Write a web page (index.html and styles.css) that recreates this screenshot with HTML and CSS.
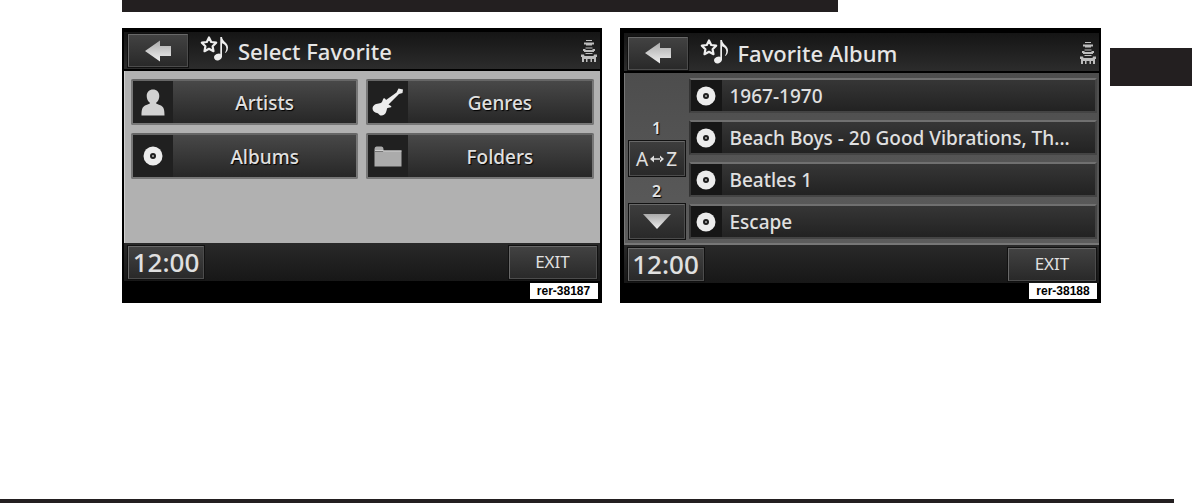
FILE: index.html
```
<!DOCTYPE html>
<html lang="en">
<head>
<meta charset="utf-8">
<title>Select Favorite</title>
<link rel="stylesheet" href="styles.css">
</head>
<body>
<svg class="defs" aria-hidden="true">
  <defs>
    <linearGradient id="metal" x1="0" y1="0" x2="0" y2="1">
      <stop offset="0" stop-color="#aaa"/><stop offset="1" stop-color="#efefef"/>
    </linearGradient>
    <symbol id="back" viewBox="0 0 28 22">
      <path d="M1 11 16 .500v5.500h11v10H16v5.500z" fill="url(#metal)"/>
    </symbol>
    <symbol id="starnote" viewBox="0 0 30 27">
      <path d="M9 2.500l2.200 4.500 5 .7-3.600 3.500.9 5L9 13.800l-4.500 2.400.9-5L1.800 7.700l5-.7z" fill="none" stroke="#eee" stroke-width="2.200" stroke-linejoin="round"/>
      <ellipse cx="18" cy="22" rx="4" ry="3.200" transform="rotate(-25 18 22)" fill="#eee"/>
      <path d="M20.300 2h1.700c.6 5 6 5.500 6 10.500 0 2.500-1 4-2.300 5.500l-.6-.5c.8-1.500 1.200-2.700 1.200-4.300 0-2.700-2-4.200-4.300-5V22h-1.700z" fill="#eee"/>
    </symbol>
    <symbol id="seats" viewBox="0 0 16 24">
      <path d="M5 1h6v1H5zM3 3.500h10v2H3zM5 5.500h6v1H5zM4.500 8.500h7v1h-7zM2 10h2l1 1h6l1-1h2v2h-1v1H3v-1H2zM4.500 14h7v1h-7zM0 15.500h3l.5 1.500h9l.5-1.500h3V18h-1v5h-2v-3h-2v3H9.500v-3h-3v3H5v-3H3v3H1v-5H0z" fill="#bdbdbd"/>
    </symbol>
    <symbol id="person" viewBox="0 0 24 27">
      <path d="M12 .500C8.300.500 5.700 3 5.700 7c0 3 1.300 5.300 3 6.500v1.200c-1 .5-3 .8-4.700 1.800C1.200 18 .500 21 .500 26.500h23c0-5.500-.7-8.500-3.500-10-1.700-1-3.700-1.300-4.700-1.800v-1.200c1.700-1.200 3-3.500 3-6.500 0-4-2.600-6.500-6.300-6.500z" fill="#d2d2d2"/>
    </symbol>
    <symbol id="disc" viewBox="0 0 20 20">
      <circle cx="10" cy="10" r="9.500" fill="#ececec"/>
      <circle cx="10" cy="10" r="3" fill="#1d1d1d"/>
      <circle cx="10" cy="10" r="1.100" fill="#aaa"/>
    </symbol>
    <symbol id="guitar" viewBox="0 0 32 28">
      <path d="M31 1.500 26.500.500 24.500 4.500 14 12c-.5-1-1-1.500-2-2-1.500 1-1 3-2.500 4.500C8 16 3 15 1 18.500c-1.500 3.500 1 6 4 6.500 2 .5 2 2.500 4.500 2.500 4 0 5-4 5.500-7 .5-1 2.500-.5 4.500-1.500-.5-1.500-2-2-3-2.500L27 6l3.500-1z" fill="#ececec"/>
    </symbol>
    <symbol id="folder" viewBox="0 0 28 21">
      <path d="M.500 20.500V3q0-2.500 2-2.500h5q2 0 2 2.500V4.500h18v16z" fill="#ababab"/>
      <path d="M1 4.500h8.500M9.500 5h18" stroke="#d0d0d0"/>
      <path d="M1 5.500h8" stroke="#777"/>
    </symbol>
    <symbol id="down" viewBox="0 0 28 15">
      <path d="M0 0h28L14 15z" fill="url(#metal)"/>
    </symbol>
    <symbol id="swap" viewBox="0 0 14 8">
      <path d="M0 4 4 .500v7zM14 4l-4-3.500v7zM3 3.300h8v1.400H3z" fill="#ddd"/>
    </symbol>
  </defs>
</svg>
<div class="page">
  <div class="top-rule"></div>
  <main class="spread">
    <section class="unit">
      <header class="bar">
        <button class="key back" aria-label="Back"><svg><use href="#back"/></svg></button>
        <svg class="starnote"><use href="#starnote"/></svg>
        <h1 class="title">Select Favorite</h1>
        <svg class="seats"><use href="#seats"/></svg>
      </header>
      <div class="tiles">
        <button class="tile"><span class="tile-icon"><svg class="person"><use href="#person"/></svg></span><span class="tile-label">Artists</span></button>
        <button class="tile"><span class="tile-icon"><svg class="guitar"><use href="#guitar"/></svg></span><span class="tile-label">Genres</span></button>
        <button class="tile"><span class="tile-icon"><svg class="disc"><use href="#disc"/></svg></span><span class="tile-label">Albums</span></button>
        <button class="tile"><span class="tile-icon"><svg class="folder"><use href="#folder"/></svg></span><span class="tile-label">Folders</span></button>
      </div>
      <footer class="status">
        <button class="key clock">12:00</button>
        <button class="key exit">EXIT</button>
      </footer>
      <div class="caption"><span class="tag">rer-38187</span></div>
    </section>
    <section class="unit unit-low">
      <header class="bar">
        <button class="key back" aria-label="Back"><svg><use href="#back"/></svg></button>
        <svg class="starnote"><use href="#starnote"/></svg>
        <h1 class="title">Favorite Album</h1>
        <svg class="seats"><use href="#seats"/></svg>
      </header>
      <div class="browser">
        <nav class="side">
          <span class="num">1</span>
          <button class="key side-key">A<svg class="swap"><use href="#swap"/></svg>Z</button>
          <span class="num">2</span>
          <button class="key side-key" aria-label="Next page"><svg class="down"><use href="#down"/></svg></button>
        </nav>
        <div class="rows">
          <button class="row"><span class="row-icon"><svg class="disc"><use href="#disc"/></svg></span><span class="row-label">1967-1970</span></button>
          <button class="row"><span class="row-icon"><svg class="disc"><use href="#disc"/></svg></span><span class="row-label">Beach Boys - 20 Good Vibrations, Th...</span></button>
          <button class="row"><span class="row-icon"><svg class="disc"><use href="#disc"/></svg></span><span class="row-label">Beatles 1</span></button>
          <button class="row"><span class="row-icon"><svg class="disc"><use href="#disc"/></svg></span><span class="row-label">Escape</span></button>
        </div>
      </div>
      <footer class="status">
        <button class="key clock">12:00</button>
        <button class="key exit">EXIT</button>
      </footer>
      <div class="caption"><span class="tag">rer-38188</span></div>
    </section>
    <div class="thumb"></div>
  </main>
  <div class="bottom-rule"></div>
</div>
</body>
</html>
```
FILE: styles.css
```
* { box-sizing: border-box; }
body { margin: 0; background: #fff; font-family: "Noto Sans", sans-serif; }
button { margin: 0; padding: 0; font: inherit; color: #e0e0e0; }
svg { display: block; flex: none; }
.defs { position: absolute; width: 0; height: 0; }

.page { min-height: 100vh; display: flex; flex-direction: column; }
.top-rule { height: 12px; margin: 0 354px 0 122px; background: #231f20; }
.bottom-rule { height: 4px; margin: auto 18px 0 0; background: #231f20; }
.spread { display: flex; align-items: flex-start; padding: 16px 0 16px 122px; }
.unit { flex: 1; min-width: 0; padding: 4px 2px; background: #000; }
.unit-low { margin-left: 18px; padding: 5px 2px 4px 4px; }
.thumb { width: 82px; height: 38px; margin: 20px 0 0 9px; background: #231f20; }

.bar { display: flex; align-items: center; height: 39px; padding: 0 3px 0 4px; border-bottom: 2px solid #000; background: linear-gradient(#151515, #2c2c2c); }
.unit-low .bar { height: 40px; padding-top: 2px; }
.key { display: flex; align-items: center; justify-content: center; border: 1px solid #686868; border-right-color: #4c4c4c; border-bottom-color: #4c4c4c; background: linear-gradient(#424242, #292929); outline: 1px solid #111; }
.back { width: 60px; height: 33px; }
.back svg { width: 28px; height: 22px; }
.starnote { width: 30px; height: 27px; margin: 0 8px 4px 12px; }
.title { flex: 1; margin: 0; font-size: 22px; line-height: 30px; font-weight: 500; color: #e6e6e6; white-space: nowrap; }
.seats { width: 16px; height: 24px; }

.tiles { display: grid; grid-template-columns: 1fr 1fr; gap: 8px; align-content: start; height: 172px; padding: 8px 6px; background: #b1b1b1; border-left: 1px solid #d0d0d0; }
.tile { display: flex; height: 46px; border: 2px solid #777; border-top-color: #666; border-radius: 2px; background: linear-gradient(#484848, #272727); font-size: 19px; text-shadow: 1px 1px 1px #000; }
.tile-icon { display: flex; align-items: center; justify-content: center; width: 40px; align-self: stretch; background: #202020; }
.tile-label { flex: 1; align-self: center; padding-top: 2px; text-align: center; line-height: 24px; font-weight: 500; }
.person { width: 24px; height: 27px; }
.guitar { width: 32px; height: 28px; }
.folder { width: 28px; height: 21px; }
.disc { width: 20px; height: 20px; }

.status { display: flex; justify-content: space-between; align-items: center; height: 38px; padding: 0 3px 0 4px; background: linear-gradient(#292929, #171717); }
.clock { width: 76px; height: 33px; font-size: 26px; line-height: 30px; font-weight: 500; }
.exit { width: 88px; height: 33px; font-size: 17px; line-height: 24px; }
.caption { display: flex; justify-content: flex-end; padding: 2px 2px 0; }
.unit-low .caption { padding-top: 0; }
.tag { width: 68px; background: #fff; color: #000; font: bold 12px/16px "Liberation Sans", sans-serif; text-align: center; }

.browser { display: flex; height: 172px; padding: 5px 2px 4px 4px; border-bottom: 2px solid #777; border-left: 1px solid #777; background: linear-gradient(#4d4d4d, #5c5c5c); }
.side { display: flex; flex-direction: column; justify-content: flex-end; width: 56px; margin-right: 4px; }
.num { height: 28px; text-align: center; font-size: 16px; line-height: 30px; font-weight: 600; color: #e4e4e4; text-shadow: 1px 1px 1px #000; }
.side-key { height: 35px; font-size: 19px; background: linear-gradient(#3d3d3d, #292929); }
.swap { width: 14px; height: 8px; margin: 0 2px; }
.down { width: 28px; height: 15px; }
.rows { flex: 1; min-width: 0; display: flex; flex-direction: column; justify-content: space-between; }
.row { display: flex; align-items: center; height: 35px; border: 2px solid #444; border-top-color: #707070; border-left-color: #333; background: linear-gradient(#363636, #222); font-size: 19px; text-align: left; overflow: hidden; }
.row-icon { display: flex; align-items: center; justify-content: center; align-self: stretch; width: 31px; background: #161616; }
.row-label { flex: 1; min-width: 0; padding-left: 8px; line-height: 24px; font-weight: 500; white-space: nowrap; }
```
